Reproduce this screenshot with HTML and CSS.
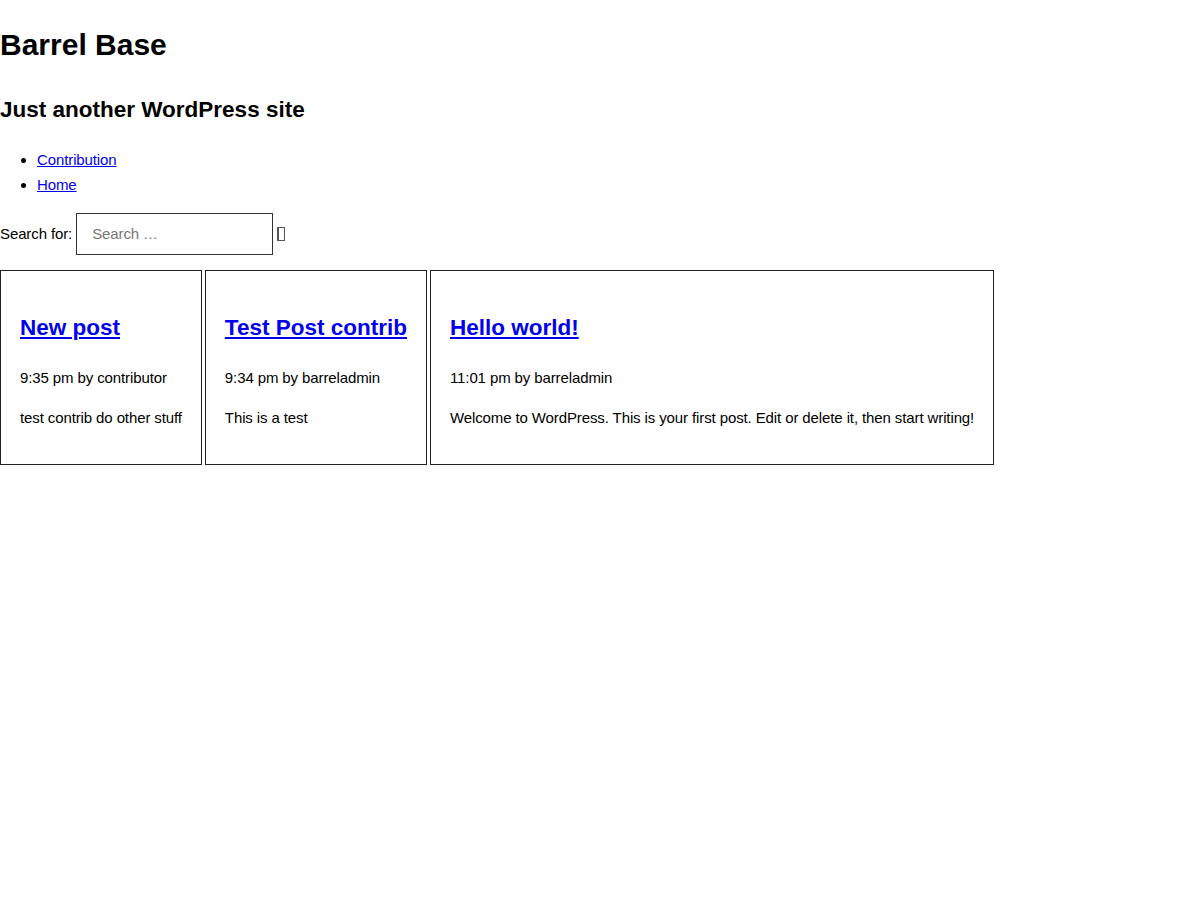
FILE: index.html
```html
<!DOCTYPE html>
<html lang="en">
<head>
<meta charset="utf-8">
<title>Barrel Base – Just another WordPress site</title>
<link rel="stylesheet" href="styles.css">
</head>
<body>
<header class="site-header">
  <h1 class="site-title">Barrel Base</h1>
  <h2 class="site-description">Just another WordPress site</h2>
  <nav class="site-nav">
    <ul class="menu">
      <li><a href="#">Contribution</a></li>
      <li><a href="#">Home</a></li>
    </ul>
  </nav>
  <form class="search-form" role="search">
    <label class="search-label" for="s">Search for:</label>
    <input class="search-field" id="s" type="search" placeholder="Search …">
    <button class="search-submit" type="submit" aria-label="Search"><span class="tofu"></span></button>
  </form>
</header>
<main class="posts">
  <article class="post-card">
    <h2 class="entry-title"><a href="#">New post</a></h2>
    <p class="entry-meta">9:35 pm by contributor</p>
    <p class="entry-excerpt">test contrib do other stuff</p>
  </article>
  <article class="post-card">
    <h2 class="entry-title"><a href="#">Test Post contrib</a></h2>
    <p class="entry-meta">9:34 pm by barreladmin</p>
    <p class="entry-excerpt">This is a test</p>
  </article>
  <article class="post-card">
    <h2 class="entry-title"><a href="#">Hello world!</a></h2>
    <p class="entry-meta">11:01 pm by barreladmin</p>
    <p class="entry-excerpt">Welcome to WordPress. This is your first post. Edit or delete it, then start writing!</p>
  </article>
</main>
</body>
</html>
```
FILE: styles.css
```css
html, body {
  background: #fff;
}

body {
  margin: 0;
  font-family: "Liberation Sans", Arial, sans-serif;
  font-size: 15px;
  letter-spacing: -0.11px;
  color: #000;
}

a {
  color: #0000ee;
}

.site-title {
  font-size: 30px;
  line-height: 34px;
  font-weight: bold;
  letter-spacing: 0;
  margin: 28px 0 0;
}

.site-description {
  font-size: 22.5px;
  font-weight: bold;
  letter-spacing: 0;
  margin: 35px 0 0;
}

.menu {
  margin: 23.5px 0 0;
  padding-left: 37px;
  list-style: disc;
}

.menu li {
  line-height: 25px;
}

.search-form {
  display: flex;
  align-items: center;
  margin-top: 16px;
}

.search-label {
  margin-right: 4px;
}

.search-field {
  box-sizing: border-box;
  width: 197px;
  height: 42px;
  border: 1px solid #333;
  border-radius: 0;
  padding: 0 15px;
  font-family: "Liberation Sans", Arial, sans-serif;
  font-size: 15px;
  letter-spacing: -0.11px;
  color: #000;
  outline: none;
  -webkit-appearance: none;
  appearance: none;
}

.search-field::placeholder {
  color: #767676;
}

.search-submit {
  display: flex;
  align-items: center;
  margin-left: 4px;
  padding: 0;
  border: 0;
  background: transparent;
  cursor: pointer;
}

.tofu {
  display: block;
  box-sizing: border-box;
  width: 8px;
  height: 14px;
  border: 1px solid #555;
  border-left-width: 2px;
}

.posts {
  display: flex;
  align-items: flex-start;
  gap: 3px;
  margin-top: 15px;
}

.post-card {
  border: 1px solid #222;
  padding: 20px 19px;
}

.entry-title {
  font-size: 22.5px;
  font-weight: bold;
  letter-spacing: 0;
  margin: 24.5px 0 28px;
}

.entry-meta {
  margin: 0 0 22.5px;
}

.entry-excerpt {
  margin: 0 0 18px;
}
```
